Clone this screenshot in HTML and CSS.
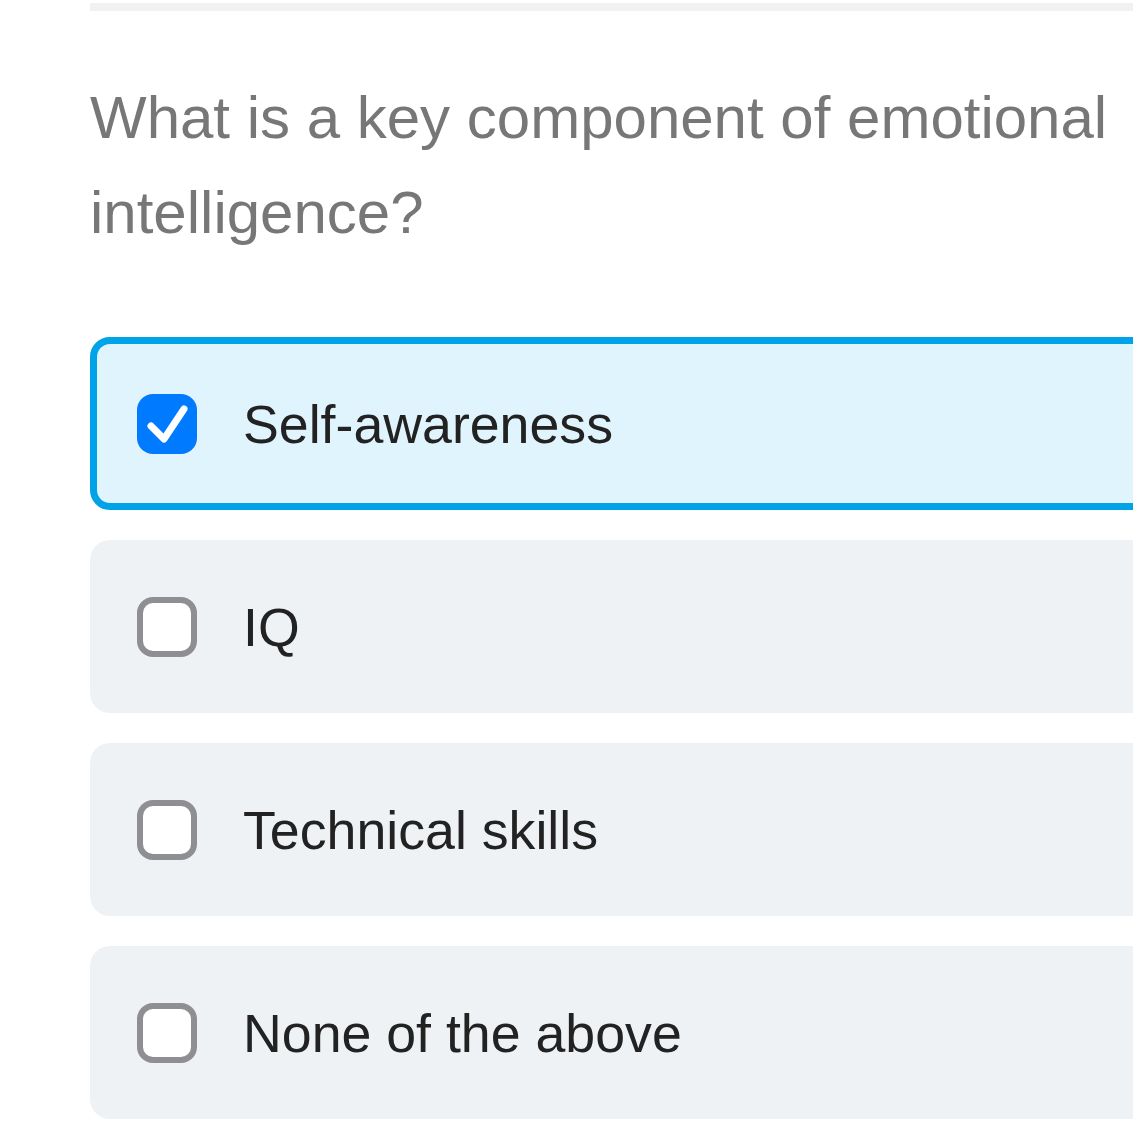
FILE: index.html
```html
<!DOCTYPE html>
<html>
<head>
<meta charset="utf-8">
<link rel="stylesheet" href="styles.css">
</head>
<body>
<div class="page">
  <div class="progress"></div>
  <h1 class="question">What is a key component of emotional intelligence?</h1>
  <div class="options">
    <div class="option selected">
      <span class="box checked">
        <svg viewBox="0 0 60 60" width="60" height="60"><path d="M14 32 L27 45 L47 15" fill="none" stroke="#fff" stroke-width="7" stroke-linecap="round" stroke-linejoin="round"/></svg>
      </span>
      <span class="label">Self-awareness</span>
    </div>
    <div class="option">
      <span class="box"></span>
      <span class="label">IQ</span>
    </div>
    <div class="option">
      <span class="box"></span>
      <span class="label">Technical skills</span>
    </div>
    <div class="option">
      <span class="box"></span>
      <span class="label">None of the above</span>
    </div>
  </div>
</div>
</body>
</html>
```

FILE: styles.css
```css
html, body {
  margin: 0;
  padding: 0;
  background: #fff;
  overflow: hidden;
}
body {
  font-family: "Liberation Sans", Arial, sans-serif;
}
.page {
  margin-left: 90px;
  width: 1200px;
  padding-top: 3px;
}
.progress {
  height: 8px;
  background: #f1f1f1;
}
.question {
  margin: 59px 0 0 0;
  font-size: 60px;
  line-height: 95px;
  font-weight: normal;
  color: #777777;
  width: 1040px;
}
.options {
  margin-top: 77px;
  display: flex;
  flex-direction: column;
  gap: 30px;
}
.option {
  height: 173px;
  box-sizing: border-box;
  border: 7px solid transparent;
  border-radius: 20px;
  background: #eff2f5;
  display: flex;
  align-items: center;
  padding-left: 40px;
}
.option.selected {
  border-color: #00a3e8;
  background: #dff4fd;
}
.box {
  width: 60px;
  height: 60px;
  box-sizing: border-box;
  border: 6px solid #8e8e93;
  border-radius: 16px;
  background: #fff;
  flex: none;
  display: flex;
}
.box.checked {
  border: none;
  background: #007aff;
}
.label {
  margin-left: 46px;
  font-size: 53.7px;
  color: #222222;
}
```
